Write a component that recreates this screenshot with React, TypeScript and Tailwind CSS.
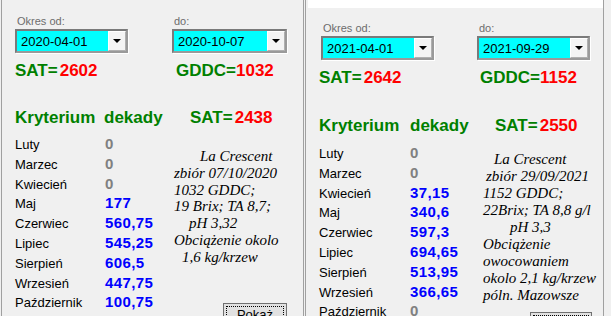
import React from 'react';

type Row = { m: string; v: string; on: boolean };
type Line = { t: string; cls: string };

type PanelProps = {
  from: string;
  to: string;
  sat: string;
  gddc: string;
  satDek: string;
  rows: Row[];
  notes: Line[];
  right?: boolean;
};

const sans = "font-['Liberation_Sans',Arial,sans-serif]";
const serif = "font-['Liberation_Serif','Times_New_Roman',serif]";

function Combo({ value, w }: { value: string; w: string }) {
  return (
    <div className={`${w} h-[24px] border-2 border-t-[#7a7a7a] border-l-[#7a7a7a] border-b-[#9a9a9a] border-r-[#9a9a9a] bg-[#00ffff] flex items-stretch shadow-[1px_1px_0_#ffffff]`}>
      <span className="flex-1 pl-[4px] flex items-center text-[13px] leading-none text-black">{value}</span>
      <div className="w-[18px] bg-[#f4f4f4] border border-t-white border-l-white border-r-[#b0b0b0] border-b-[#b0b0b0] flex items-center justify-center">
        <div className="w-0 h-0 border-l-[4px] border-r-[4px] border-t-[4px] border-l-transparent border-r-transparent border-t-black" />
      </div>
    </div>
  );
}

function Panel({ from, to, sat, gddc, satDek, rows, notes, right }: PanelProps) {
  return (
    <div
      className={
        right
          ? 'w-[299px] h-full shrink-0 border-l border-r border-[#a0a0a0] bg-[#f0f0f0]'
          : 'ml-[1px] w-[303px] h-full shrink-0 border-l border-r border-[#a0a0a0] bg-[#f0f0f0]'
      }
    >
      {right && <div className="h-[8px] ml-[2px] bg-white" />}
      <div className={right ? 'pl-[13px] pt-[14px]' : 'pl-[13px] pt-[15px]'}>
        <div className={right ? 'flex ml-[4px] text-[11px] leading-[13px] text-[#6d6d6d]' : 'flex ml-[2px] text-[11px] leading-[13px] text-[#6d6d6d]'}>
          <div className={right ? 'w-[156px]' : 'w-[157px]'}>Okres od:</div>
          <div>do:</div>
        </div>
        <div className={right ? 'flex mt-[1px] ml-[2px]' : 'flex mt-[1px]'}>
          <div className={right ? 'w-[156px]' : 'w-[157px]'}>
            <Combo value={from} w="w-[113px]" />
          </div>
          <Combo value={to} w={right ? 'w-[113px]' : 'w-[115px]'} />
        </div>
        <div className="flex mt-[8px] text-[17px] leading-[20px] font-bold">
          <div className="w-[161px] text-[#008000]">
            SAT=<span className="ml-[2px] text-[#ff0000]">{sat}</span>
          </div>
          <div className="text-[#008000]">
            GDDC=<span className="text-[#ff0000]">{gddc}</span>
          </div>
        </div>
        <div className={right ? 'flex mt-[28px] text-[17px] leading-[20px] font-bold text-[#008000]' : 'flex mt-[27px] text-[17px] leading-[20px] font-bold text-[#008000]'}>
          <div className={right ? 'w-[91px]' : 'w-[89px]'}>Kryterium</div>
          <div className={right ? 'w-[85px]' : 'w-[86px]'}>dekady</div>
          <div>
            SAT=<span className="ml-[2px] text-[#ff0000]">{satDek}</span>
          </div>
        </div>
        <div className={right ? 'flex mt-[7px]' : 'flex mt-[6px]'}>
          <div className={right ? 'w-[164px] shrink-0' : 'w-[158px] shrink-0'}>
            {rows.map((r) => (
              <div key={r.m} className="flex items-baseline h-[19.8px] leading-[19.8px]">
                <span className={right ? 'w-[91px] text-[13px] text-black' : 'w-[90px] text-[13px] text-black'}>{r.m}</span>
                <span className={r.on ? 'text-[15px] font-bold tracking-[0.4px] text-[#0000ff]' : 'text-[15px] font-bold tracking-[0.4px] text-[#808080]'}>
                  {r.v}
                </span>
              </div>
            ))}
          </div>
          <div className={right ? 'mt-[8px]' : 'mt-[14px]'}>
            <div className={`${serif} italic text-[15px] text-black whitespace-nowrap ${right ? 'leading-[17px]' : 'leading-[16.8px]'}`}>
              {notes.map((l, i) => (
                <div key={i} className={l.cls}>
                  {l.t}
                </div>
              ))}
            </div>
            <div
              className={
                right
                  ? 'mt-[8px] ml-[47px] w-[62px] h-[25px] border border-[#707070] bg-[#e1e1e1] p-[2px]'
                  : 'mt-[37px] ml-[50px] w-[64px] h-[25px] border border-[#707070] bg-[#e1e1e1] p-[2px]'
              }
            >
              <div className="h-full border border-dotted border-black flex items-center justify-center text-[13px] text-black">
                Pokaż
              </div>
            </div>
          </div>
        </div>
      </div>
    </div>
  );
}

const leftRows: Row[] = [
  { m: 'Luty', v: '0', on: false },
  { m: 'Marzec', v: '0', on: false },
  { m: 'Kwiecień', v: '0', on: false },
  { m: 'Maj', v: '177', on: true },
  { m: 'Czerwiec', v: '560,75', on: true },
  { m: 'Lipiec', v: '545,25', on: true },
  { m: 'Sierpień', v: '606,5', on: true },
  { m: 'Wrzesień', v: '447,75', on: true },
  { m: 'Październik', v: '100,75', on: true },
];

const rightRows: Row[] = [
  { m: 'Luty', v: '0', on: false },
  { m: 'Marzec', v: '0', on: false },
  { m: 'Kwiecień', v: '37,15', on: true },
  { m: 'Maj', v: '340,6', on: true },
  { m: 'Czerwiec', v: '597,3', on: true },
  { m: 'Lipiec', v: '694,65', on: true },
  { m: 'Sierpień', v: '513,95', on: true },
  { m: 'Wrzesień', v: '366,65', on: true },
  { m: 'Październik', v: '0', on: false },
];

const leftNotes: Line[] = [
  { t: 'La Crescent', cls: 'pl-[27px]' },
  { t: 'zbiór 07/10/2020', cls: 'pl-[1px]' },
  { t: '1032 GDDC;', cls: 'pl-[1px]' },
  { t: '19 Brix; TA 8,7;', cls: 'pl-[1px]' },
  { t: 'pH 3,32', cls: 'pl-[16px]' },
  { t: 'Obciążenie okolo', cls: 'pl-[1px]' },
  { t: '1,6 kg/krzew', cls: 'pl-[9px]' },
];

const rightNotes: Line[] = [
  { t: 'La Crescent', cls: 'pl-[11px]' },
  { t: 'zbiór 29/09/2021', cls: 'pl-[3px]' },
  { t: '1152 GDDC;', cls: 'pl-0' },
  { t: '22Brix; TA 8,8 g/l', cls: 'pl-0' },
  { t: 'pH 3,3', cls: 'pl-[27px]' },
  { t: 'Obciążenie', cls: 'pl-0' },
  { t: 'owocowaniem', cls: 'pl-0' },
  { t: 'okolo 2,1 kg/krzew', cls: 'pl-0' },
  { t: 'póln. Mazowsze', cls: 'pl-0' },
];

export default function App() {
  return (
    <div className={`${sans} w-[611px] h-[316px] overflow-hidden bg-[#f0f0f0] flex`}>
      <Panel from="2020-04-01" to="2020-10-07" sat="2602" gddc="1032" satDek="2438" rows={leftRows} notes={leftNotes} />
      <div className="w-[1px] shrink-0" />
      <Panel from="2021-04-01" to="2021-09-29" sat="2642" gddc="1152" satDek="2550" rows={rightRows} notes={rightNotes} right />
    </div>
  );
}
